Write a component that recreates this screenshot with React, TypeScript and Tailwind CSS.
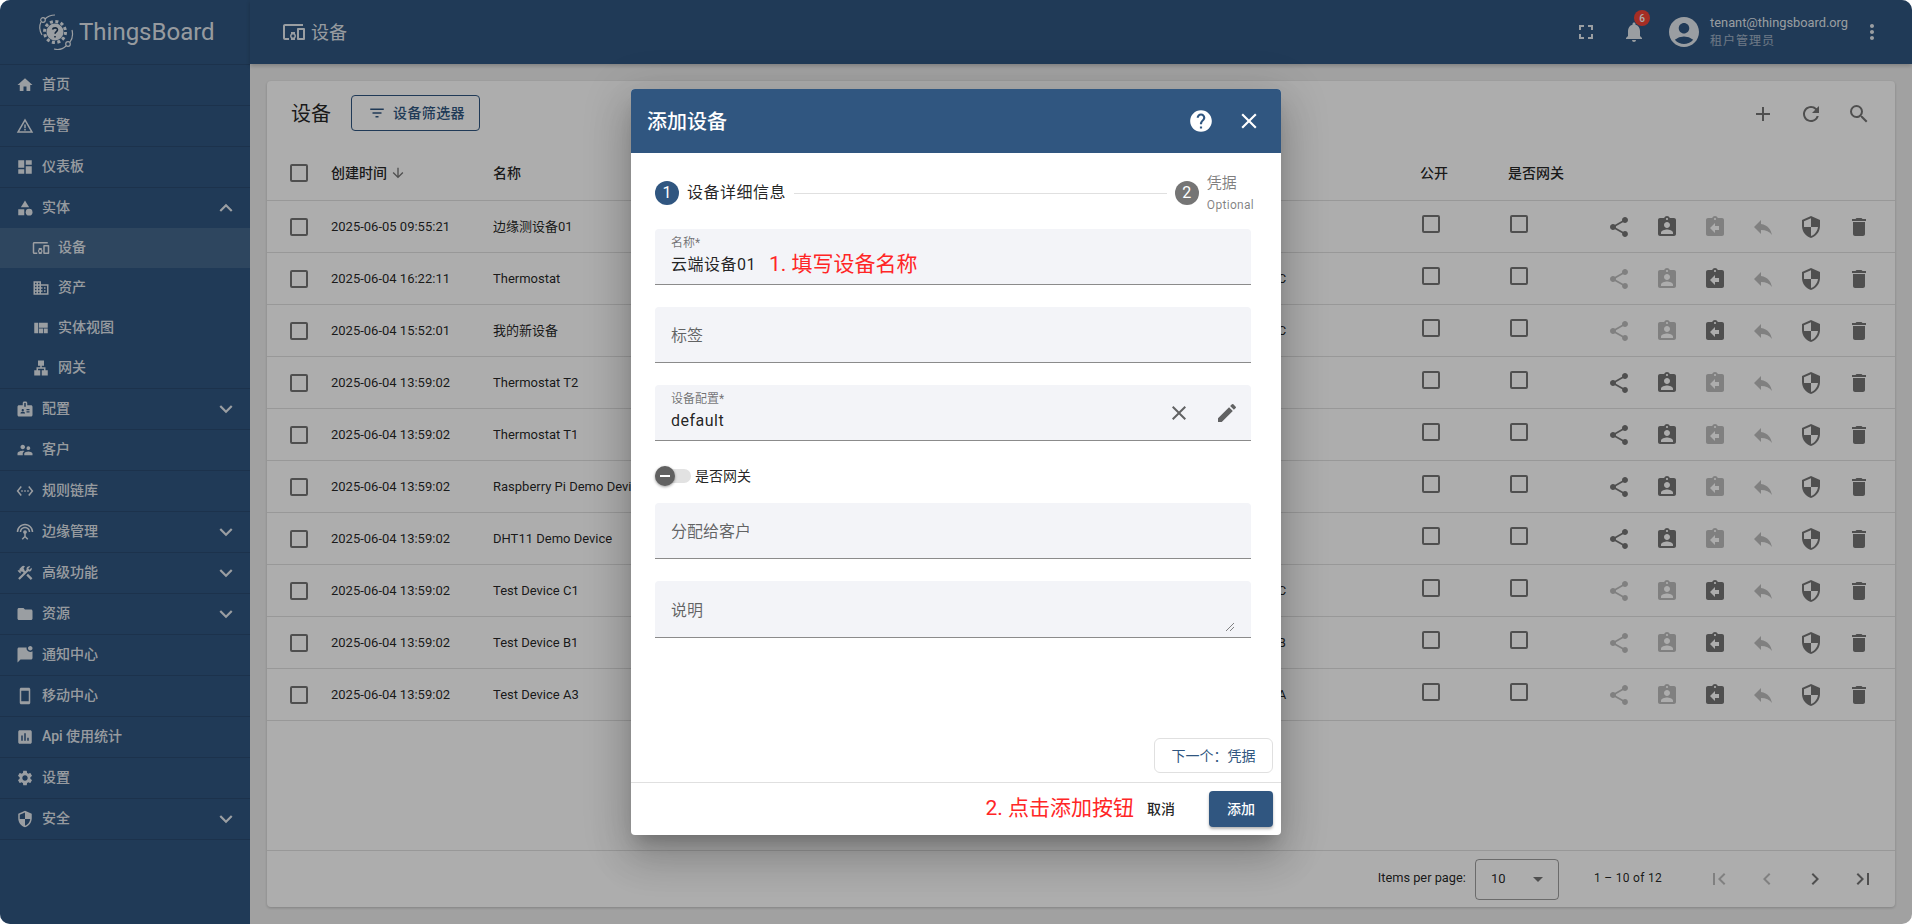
import type { ReactNode } from 'react'
import {
  MdAccountCircle, MdAdd, MdArrowDownward, MdArrowDropDown, MdAssessment, MdAssignmentInd, MdAssignmentReturn,
  MdBadge, MdCategory, MdChevronLeft, MdChevronRight, MdClose, MdConstruction, MdDashboard, MdDelete,
  MdDevicesOther, MdDomain, MdEdit, MdExpandLess, MdExpandMore, MdFilterList, MdFirstPage, MdFolder, MdFullscreen,
  MdHelp, MdHome, MdLan, MdLastPage, MdMarkChatUnread, MdMoreVert, MdNotifications, MdRefresh, MdReply, MdSearch,
  MdSecurity, MdSettings, MdSettingsEthernet, MdSettingsInputAntenna, MdShare, MdSmartphone, MdSupervisorAccount,
  MdViewQuilt, MdWarningAmber,
} from 'react-icons/md'

// Sidebar entries
const menu = [
  { icon: <MdHome />, label: '首页' },
  { icon: <MdWarningAmber />, label: '告警' },
  { icon: <MdDashboard />, label: '仪表板' },
  { icon: <MdCategory />, label: '实体', open: true },
  { icon: <MdBadge />, label: '配置', more: true },
  { icon: <MdSupervisorAccount />, label: '客户' },
  { icon: <MdSettingsEthernet />, label: '规则链库' },
  { icon: <MdSettingsInputAntenna />, label: '边缘管理', more: true },
  { icon: <MdConstruction />, label: '高级功能', more: true },
  { icon: <MdFolder />, label: '资源', more: true },
  { icon: <MdMarkChatUnread />, label: '通知中心' },
  { icon: <MdSmartphone />, label: '移动中心' },
  { icon: <MdAssessment />, label: 'Api 使用统计' },
  { icon: <MdSettings />, label: '设置' },
  { icon: <MdSecurity />, label: '安全', more: true },
]

const subMenu = [
  { icon: <MdDevicesOther />, label: '设备', active: true },
  { icon: <MdDomain />, label: '资产' },
  { icon: <MdViewQuilt />, label: '实体视图' },
  { icon: <MdLan />, label: '网关' },
]

const devices = [
  { time: '2025-06-05 09:55:21', name: '边缘测设备01', customer: '' },
  { time: '2025-06-04 16:22:11', name: 'Thermostat', customer: 'Customer C' },
  { time: '2025-06-04 15:52:01', name: '我的新设备', customer: 'Customer C' },
  { time: '2025-06-04 13:59:02', name: 'Thermostat T2', customer: '' },
  { time: '2025-06-04 13:59:02', name: 'Thermostat T1', customer: '' },
  { time: '2025-06-04 13:59:02', name: 'Raspberry Pi Demo Device', customer: '' },
  { time: '2025-06-04 13:59:02', name: 'DHT11 Demo Device', customer: '' },
  { time: '2025-06-04 13:59:02', name: 'Test Device C1', customer: 'Customer C' },
  { time: '2025-06-04 13:59:02', name: 'Test Device B1', customer: 'Customer B' },
  { time: '2025-06-04 13:59:02', name: 'Test Device A3', customer: 'Customer A' },
]

const rowGrid = 'grid grid-cols-[64px_162px_227px_240px_258px_202px_88px_87px_1fr] items-center border-b border-black/12'

function Logo() {
  return (
    <svg viewBox="0 0 38 38" className="w-[38px] h-[38px] shrink-0 text-white/87" fill="none" stroke="currentColor">
      <circle cx="18" cy="19" r="8.5" fill="currentColor" stroke="none" />
      <circle cx="18" cy="19" r="10.5" strokeWidth="3" strokeDasharray="3 2.5" />
      <path d="M15.5 16.5c.5-2 5-2.500 5 .3 0 1.800-2.400 1.800-2.400 4M18 23v1.500" stroke="#203a59" strokeWidth="1.600" />
      <circle cx="6" cy="7" r="2.300" strokeWidth="1.200" />
      <path d="M8 6C11 3 14 2 18 2M4 9C2 13 2 17 5 22" strokeWidth="1.200" />
      <circle cx="31" cy="31" r="2.300" strokeWidth="1.200" />
      <path d="M29 33c-3 3-8 4-12 3M33 29c3-4 3-8 2-12" strokeWidth="1.200" />
    </svg>
  )
}

function Sidebar() {
  const item = 'flex items-center border-b border-black/12 text-sm font-medium text-white/87'
  return (
    <aside className="w-[250px] shrink-0 bg-[#305680] flex flex-col">
      <div className="h-[65px] shrink-0 flex items-center pl-[37px] gap-[4px] border-b border-black/12">
        <Logo />
        <span className="text-[24px] text-white/87">ThingsBoard</span>
      </div>
      {menu.map((m) => (
        <div key={m.label}>
          <div className={`${item} pl-4 ${m.open ? 'h-10 border-b-0' : 'h-[41px]'}`}>
            <span className="text-[18px] mr-2">{m.icon}</span>
            <span className="-translate-y-[1px]">{m.label}</span>
            {m.more && <MdExpandMore className="ml-auto mr-[11px] text-[26px]" />}
            {m.open && <MdExpandLess className="ml-auto mr-[11px] text-[26px]" />}
          </div>
          {m.open && (
            <div className="border-b border-black/12">
              {subMenu.map((s) => (
                <div key={s.label} className={`h-10 flex items-center pl-8 text-sm font-medium text-white/87 ${s.active ? 'bg-white/10' : ''}`}>
                  <span className="text-[18px] mr-2">{s.icon}</span>
                  <span className="-translate-y-[1px]">{s.label}</span>
                </div>
              ))}
            </div>
          )}
        </div>
      ))}
    </aside>
  )
}

function Topbar() {
  return (
    <header className="h-16 shrink-0 bg-[#305680] flex items-center text-white/87 shadow-[0_2px_4px_rgba(0,0,0,.2)] z-10">
      <MdDevicesOther className="ml-8 text-[24px]" />
      <span className="ml-[5px] text-[18px]">设备</span>
      <MdFullscreen className="ml-auto text-[24px]" />
      <div className="relative ml-[24px]">
        <MdNotifications className="text-[24px]" />
        <span className="absolute -top-[10px] left-[12px] w-4 h-4 rounded-full bg-[#f44336] text-white text-[10px] font-medium flex items-center justify-center">6</span>
      </div>
      <MdAccountCircle className="ml-[20px] text-[36px]" />
      <div className="ml-[8px] flex flex-col">
        <span className="text-[12.8px] leading-[18px]">tenant@thingsboard.org</span>
        <span className="text-[12px] leading-[18px] tracking-[1px] text-white/55">租户管理员</span>
      </div>
      <MdMoreVert className="ml-[12px] mr-[28px] text-[24px]" />
    </header>
  )
}

function Box({ className }: { className?: string }) {
  return <div className={`w-[18px] h-[18px] rounded-[2px] border-2 border-black/54 ${className ?? ''}`} />
}

function DeviceTable() {
  return (
    <section className="flex-1 bg-white rounded-[4px] shadow-[0_1px_3px_rgba(0,0,0,.2)] flex flex-col">
      <div className="h-[65px] shrink-0 flex items-center pl-6 text-black/54">
        <h1 className="text-[20px] font-normal text-black/87">设备</h1>
        <button className="ml-[20px] -mt-[2px] w-[129px] h-9 border border-[#305680] rounded-[4px] flex items-center pl-4 text-sm font-medium tracking-[.4px] text-[#305680]">
          <MdFilterList className="text-[18px] mr-[7px]" />
          设备筛选器
        </button>
        <MdAdd className="ml-auto text-[24px]" />
        <MdRefresh className="ml-6 text-[24px]" />
        <MdSearch className="ml-6 mr-[24px] text-[24px]" />
      </div>
      <div className={`${rowGrid} h-[55px] text-sm font-medium text-black/87`}>
        <div className="pl-[23px]"><Box /></div>
        <div className="flex items-center gap-[3px]">创建时间<MdArrowDownward className="text-[16px] text-black/54" /></div>
        <div>名称</div>
        <div />
        <div />
        <div />
        <div>公开</div>
        <div>是否网关</div>
        <div />
      </div>
      {devices.map((d, i) => {
        const assigned = d.customer !== ''
        return (
          <div key={i} className={`${rowGrid} h-[52px] text-[13px] text-black/87 whitespace-nowrap`}>
            <div className="pl-[23px]"><Box /></div>
            <div>{d.time}</div>
            <div>{d.name}</div>
            <div />
            <div />
            <div>{d.customer}</div>
            <div className="pl-[2px]"><Box className="-translate-y-[3px]" /></div>
            <div className="pl-[2px]"><Box className="-translate-y-[3px]" /></div>
            <div className="flex text-[24px] text-black/54">
              <span className="w-12 flex justify-center"><MdShare className={assigned ? 'text-black/26' : ''} /></span>
              <span className="w-12 flex justify-center"><MdAssignmentInd className={assigned ? 'text-black/26' : ''} /></span>
              <span className="w-12 flex justify-center"><MdAssignmentReturn className={assigned ? '' : 'text-black/26'} /></span>
              <span className="w-12 flex justify-center"><MdReply className="text-black/26" /></span>
              <span className="w-12 flex justify-center"><MdSecurity /></span>
              <span className="w-12 flex justify-center"><MdDelete /></span>
            </div>
          </div>
        )
      })}
      <div className="mt-auto h-[57px] border-t border-black/12 flex items-center text-black/87 text-xs">
        <span className="ml-auto text-[12.8px] -translate-y-[1px]">Items per page:</span>
        <div className="ml-[9px] w-[84px] h-[41px] border border-black/38 rounded-[4px] flex items-center pl-[15px] pr-[8px] text-[13px]">
          10
          <MdArrowDropDown className="ml-auto text-[24px] text-black/54" />
        </div>
        <span className="ml-[35px] text-xs tracking-[.3px] -translate-y-[1px]">1 – 10 of 12</span>
        <div className="ml-[33px] mr-[8px] flex text-[24px] text-black/54">
          <span className="w-12 flex justify-center text-black/26"><MdFirstPage /></span>
          <span className="w-12 flex justify-center text-black/26"><MdChevronLeft /></span>
          <span className="w-12 flex justify-center"><MdChevronRight /></span>
          <span className="w-12 flex justify-center"><MdLastPage /></span>
        </div>
      </div>
    </section>
  )
}

function Field({ label, placeholder, children, className }: { label?: string; placeholder?: string; children?: ReactNode; className?: string }) {
  return (
    <div className={`relative w-[596px] bg-[#f3f4f8] rounded-t-[4px] border-b border-[#8b8b8b] pl-4 ${className ?? 'h-14 mb-[22px]'}`}>
      {label && <div className="text-xs text-black/55 leading-[14px] pt-[7px] h-[20px]">{label}</div>}
      {children}
      {placeholder && <div className="h-full flex items-center pt-[3px] text-base text-black/60">{placeholder}</div>}
    </div>
  )
}

function AddDeviceDialog() {
  return (
    <div className="absolute inset-0 z-20 bg-black/32 flex items-center justify-center">
      <div className="w-[650px] h-[746px] bg-white rounded-[4px] overflow-hidden flex flex-col shadow-[0_11px_15px_-7px_rgba(0,0,0,.2),0_24px_38px_3px_rgba(0,0,0,.14),0_9px_46px_8px_rgba(0,0,0,.12)]">
        <div className="h-16 shrink-0 bg-[#305680] text-white flex items-center pl-4 pr-2">
          <h2 className="text-[20px] font-medium translate-y-[1px]">添加设备</h2>
          <span className="ml-auto w-12 h-12 flex items-center justify-center text-[26px]"><MdHelp /></span>
          <span className="w-12 h-12 flex items-center justify-center text-[26px]"><MdClose /></span>
        </div>
        <div className="flex-1 pl-6 pr-2 flex flex-col">
          <div className="h-[76px] shrink-0 pt-1 flex items-center w-[600px]">
            <span className="w-6 h-6 rounded-full bg-[#305680] text-white text-base flex items-center justify-center">1</span>
            <span className="ml-2 text-base tracking-[.5px] text-black/87">设备详细信息</span>
            <div className="flex-1 h-px bg-[#e0e0e0] mx-2" />
            <span className="w-6 h-6 rounded-full bg-[#757575] text-white text-base flex items-center justify-center">2</span>
            <div className="ml-2 mr-[1px] flex flex-col gap-[6px]">
              <span className="text-[15px] leading-[18px] text-black/50">凭据</span>
              <span className="text-xs leading-[14px] text-black/50 tracking-[.3px]">Optional</span>
            </div>
          </div>
          <Field label="名称*">
            <div className="flex items-center h-[32px]">
              <span className="text-base text-black/87 tracking-[.5px]">云端设备01</span>
              <span className="ml-[13px] text-[21px] text-[#ff2626]">1. 填写设备名称</span>
            </div>
          </Field>
          <Field placeholder="标签" />
          <Field label="设备配置*" className="h-14">
            <div className="flex items-center h-[32px] text-base text-black/87 tracking-[.5px]">default</div>
            <div className="absolute right-0 top-0 h-full flex items-center text-black/60">
              <span className="w-12 flex justify-center text-[24px]"><MdClose /></span>
              <span className="w-12 flex justify-center text-[24px]"><MdEdit /></span>
            </div>
          </Field>
          <div className="h-[62px] shrink-0 pt-[35px] relative">
            <div className="relative flex items-center h-0">
              <div className="w-9 h-[14px] rounded-full bg-[#e2e2e2]" />
              <span className="absolute left-0 w-5 h-5 rounded-full bg-[#616161] shadow-[0_1px_3px_rgba(0,0,0,.4)] flex items-center justify-center">
                <span className="w-[10px] h-[2px] bg-white" />
              </span>
              <span className="ml-1 text-sm text-black/87">是否网关</span>
            </div>
          </div>
          <Field placeholder="分配给客户" />
          <Field placeholder="说明" className="h-[57px]">
            <svg viewBox="0 0 10 10" className="absolute right-[16px] bottom-[5px] w-[10px] h-[10px] text-black/60" stroke="currentColor" strokeWidth="0.8">
              <path d="M1 9 9 1M5 9 9 5" />
            </svg>
          </Field>
          <div className="mt-auto mb-[9px] self-end w-[119px] h-[35px] border border-[#e0e0e0] rounded-md flex items-center justify-center text-sm text-[#305680]">下一个：凭据</div>
        </div>
        <div className="h-[53px] shrink-0 border-t border-[#e0e0e0] flex items-center justify-end pr-2">
          <span className="text-[21px] text-[#ff2626]">2. 点击添加按钮</span>
          <span className="ml-[13px] text-sm font-medium text-black/87">取消</span>
          <button className="ml-[34px] w-16 h-9 rounded-[4px] bg-[#305680] text-white text-sm font-medium shadow-[0_2px_3px_rgba(0,0,0,.3)]">添加</button>
        </div>
      </div>
    </div>
  )
}

export default function App() {
  return (
    <div className="relative w-[1912px] h-[924px] rounded-[10px] overflow-hidden flex bg-[#eeeeee] font-['Roboto','Noto_Sans_CJK_SC',sans-serif]">
      <Sidebar />
      <div className="flex-1 min-w-0 flex flex-col">
        <Topbar />
        <main className="flex-1 p-[17px] flex min-h-0">
          <DeviceTable />
        </main>
      </div>
      <AddDeviceDialog />
    </div>
  )
}
